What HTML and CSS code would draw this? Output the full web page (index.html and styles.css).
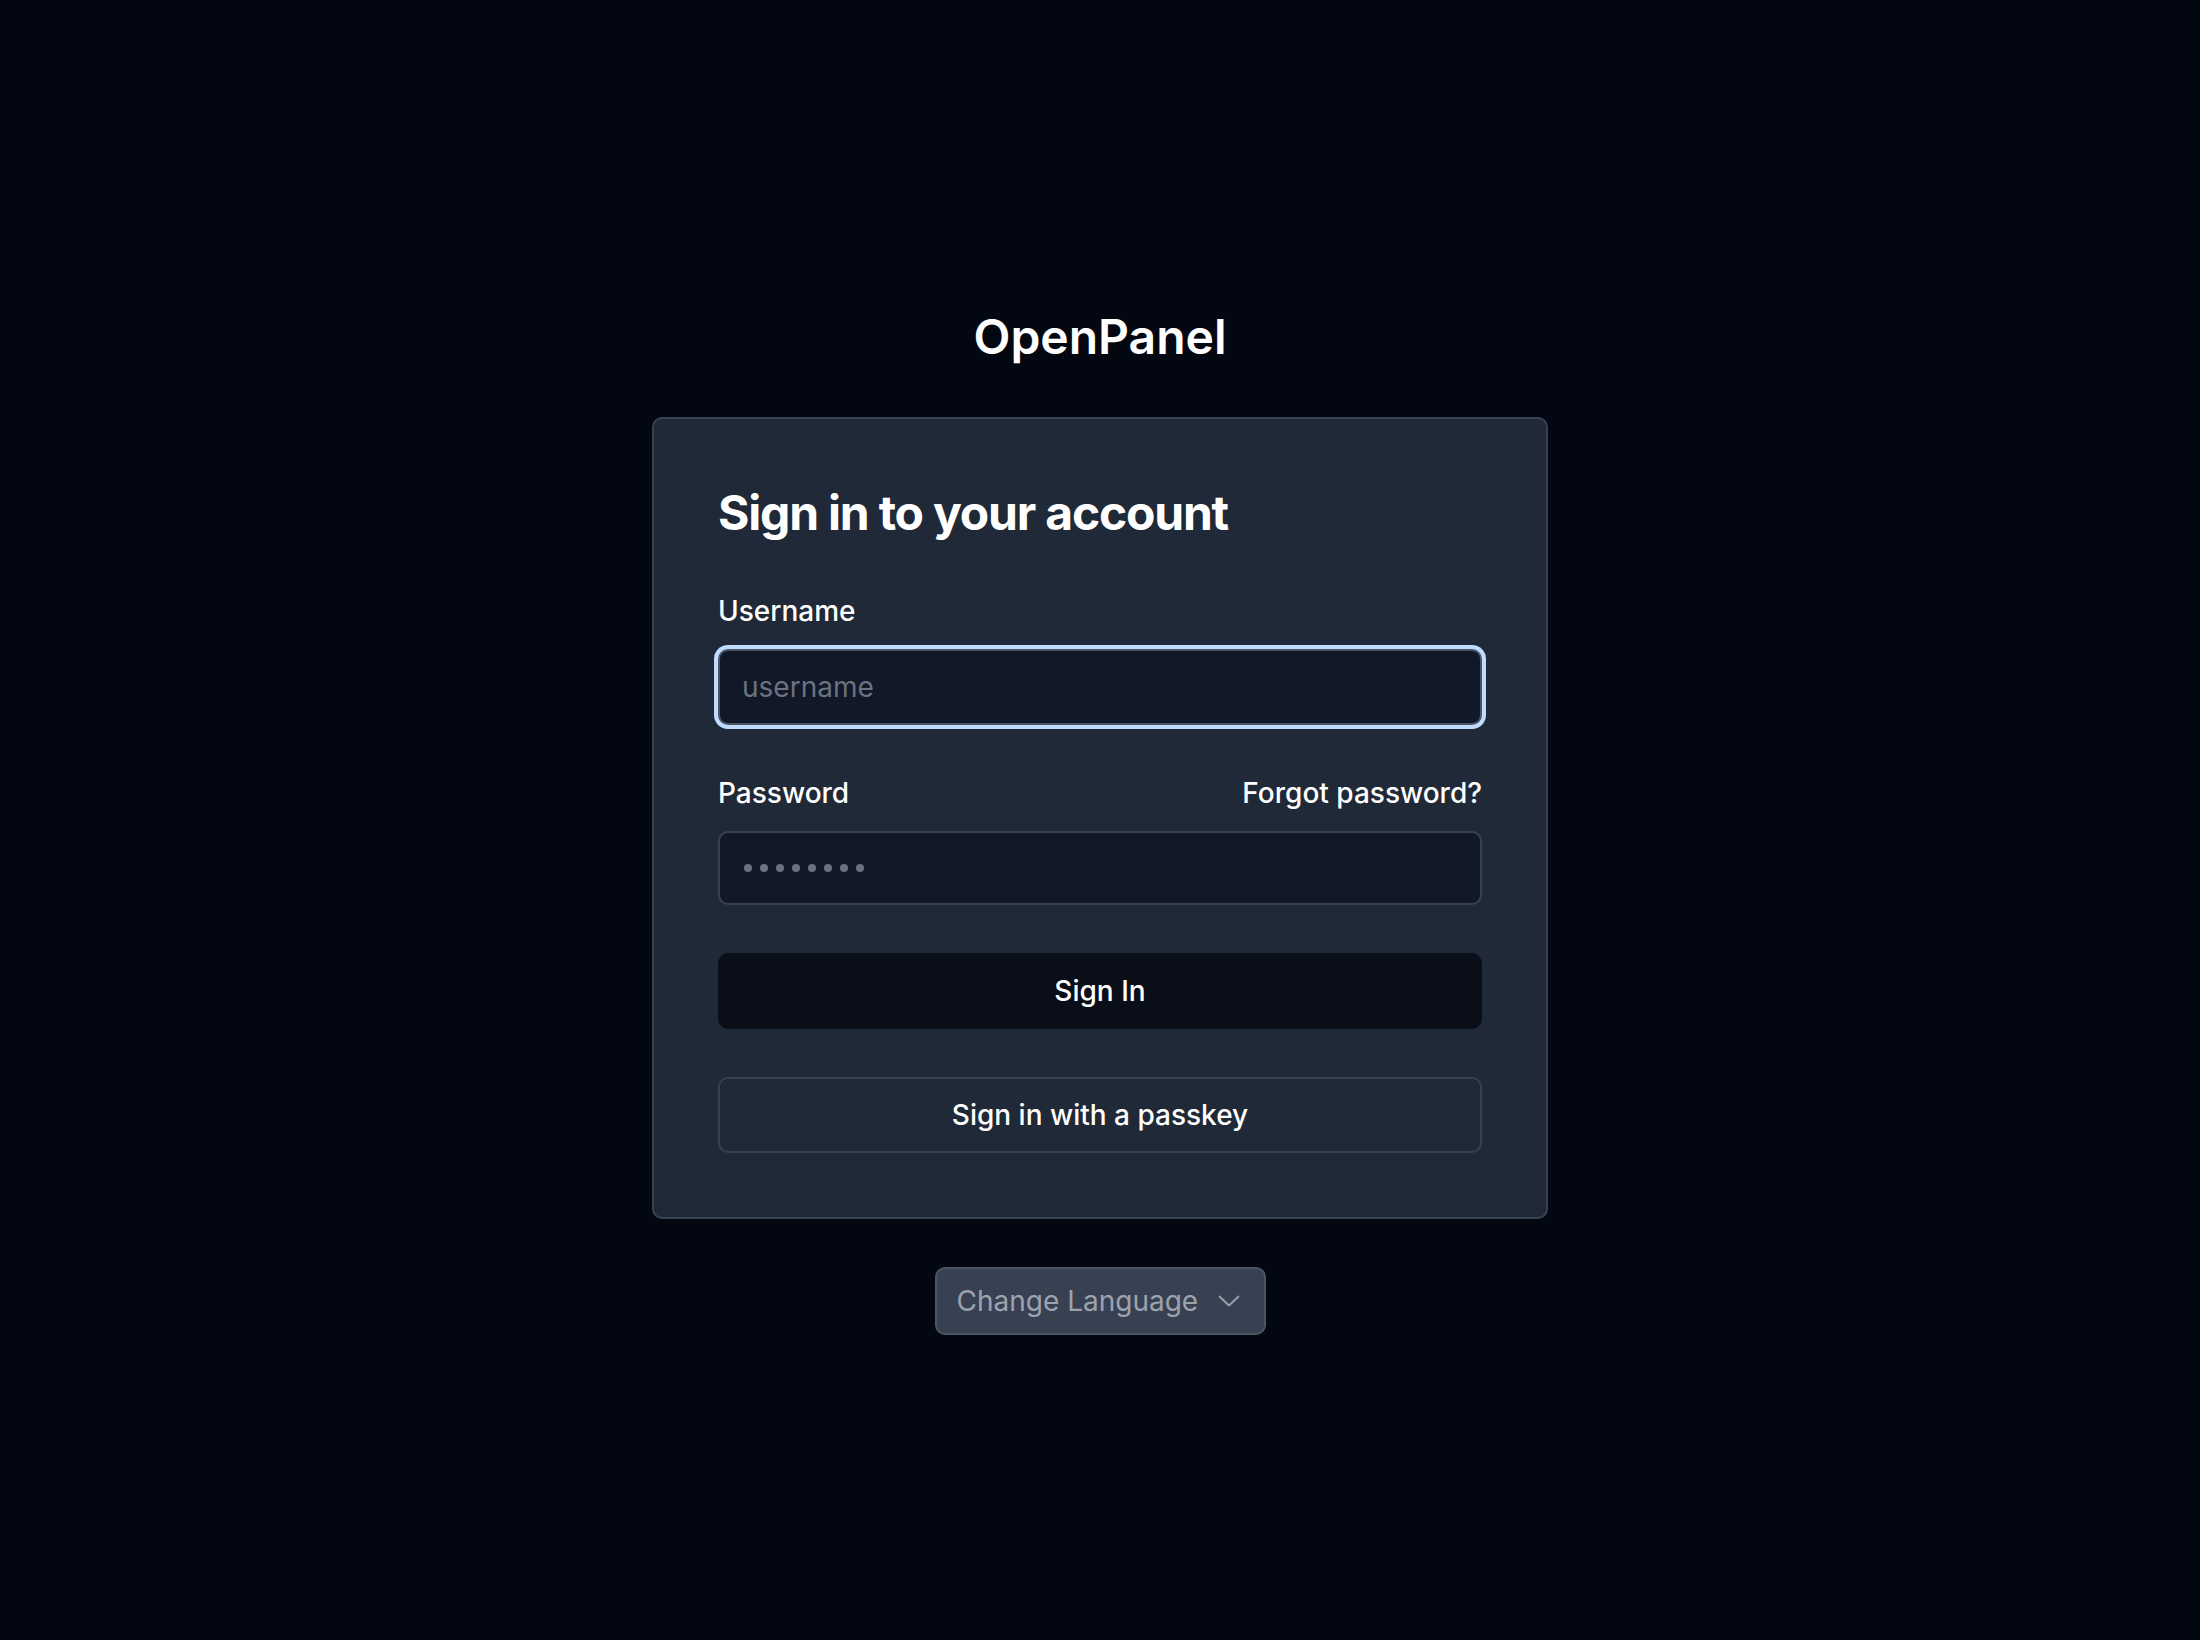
FILE: index.html
```html
<!DOCTYPE html>
<html lang="en">
<head>
<meta charset="utf-8">
<title>OpenPanel - Sign in</title>
<link rel="stylesheet" href="styles.css">
</head>
<body>
<main class="wrap">
  <div class="brand">OpenPanel</div>
  <section class="card">
    <h1 class="heading">Sign in to your account</h1>
    <form class="form">
      <div class="field">
        <div class="label-row"><label class="label" for="username">Username</label></div>
        <div class="input focused"><span class="placeholder">username</span></div>
      </div>
      <div class="field">
        <div class="label-row">
          <label class="label" for="password">Password</label>
          <a class="label link" href="#">Forgot password?</a>
        </div>
        <div class="input"><span class="dots"><i></i><i></i><i></i><i></i><i></i><i></i><i></i><i></i></span></div>
      </div>
      <button type="button" class="btn btn-primary">Sign In</button>
      <button type="button" class="btn btn-outline">Sign in with a passkey</button>
    </form>
  </section>
  <div class="lang">
    <span class="lang-text">Change Language</span>
    <svg class="chev" width="22" height="12" viewBox="0 0 22 12" fill="none"><path d="M1.5 1.5 L11 10.5 L20.5 1.5" stroke="#9ca3af" stroke-width="1.8" stroke-linecap="round" stroke-linejoin="round"/></svg>
  </div>
</main>
</body>
</html>
```

FILE: styles.css
```css
* { box-sizing: border-box; }
html, body { margin: 0; padding: 0; }
body {
  background: #030712;
  font-family: Inter, "Noto Sans", "Liberation Sans", sans-serif;
  color: #ffffff;
  min-height: 100vh;
  display: flex;
  align-items: center;
  justify-content: center;
}
.wrap {
  width: 896px;
  display: flex;
  flex-direction: column;
  align-items: center;
}
.brand {
  font-size: 48px;
  line-height: 64px;
  font-weight: 600;
  color: #ffffff;
  margin-bottom: 48px;
}
.card {
  width: 896px;
  background: #1f2937;
  border: 2px solid #374151;
  border-radius: 10px;
  padding: 64px;
}
.heading {
  margin: 0 0 48px;
  font-size: 48px;
  line-height: 60px;
  font-weight: 700;
  letter-spacing: -0.025em;
  color: #ffffff;
}
.form {
  display: flex;
  flex-direction: column;
  gap: 48px;
}
.field { display: flex; flex-direction: column; }
.label-row {
  display: flex;
  justify-content: space-between;
  align-items: center;
  margin-bottom: 18px;
}
.label {
  font-size: 28px;
  line-height: 40px;
  font-weight: 500;
  color: #ffffff;
  text-decoration: none;
}
.input {
  height: 74px;
  background: #111827;
  border: 2px solid #374151;
  border-radius: 10px;
  padding: 0 22px;
  display: flex;
  align-items: center;
}
.input.focused {
  height: 76px;
  border-color: #4b5563;
  box-shadow: 0 0 0 4px #bfdbfe;
}
.placeholder {
  font-size: 28px;
  line-height: 40px;
  color: #6b7280;
}
.dots { display: flex; gap: 8px; margin-left: 2px; }
.dots i {
  width: 8px;
  height: 8px;
  border-radius: 50%;
  background: #6b7280;
  display: block;
}
.btn {
  height: 76px;
  width: 100%;
  border-radius: 10px;
  font-family: inherit;
  font-size: 28px;
  line-height: 40px;
  font-weight: 500;
  color: #ffffff;
  cursor: pointer;
}
.btn-primary {
  background: #0a0e19;
  border: none;
}
.btn-outline {
  background: transparent;
  border: 2px solid #374151;
}
.lang {
  margin-top: 48px;
  height: 68px;
  width: 331px;
  background: #374151;
  border: 2px solid #4b5563;
  border-radius: 10px;
  padding: 0 24px 0 20px;
  display: flex;
  align-items: center;
  justify-content: space-between;
}
.lang-text {
  font-size: 28px;
  line-height: 40px;
  color: #9ca3af;
}
.chev { display: block; }
```
